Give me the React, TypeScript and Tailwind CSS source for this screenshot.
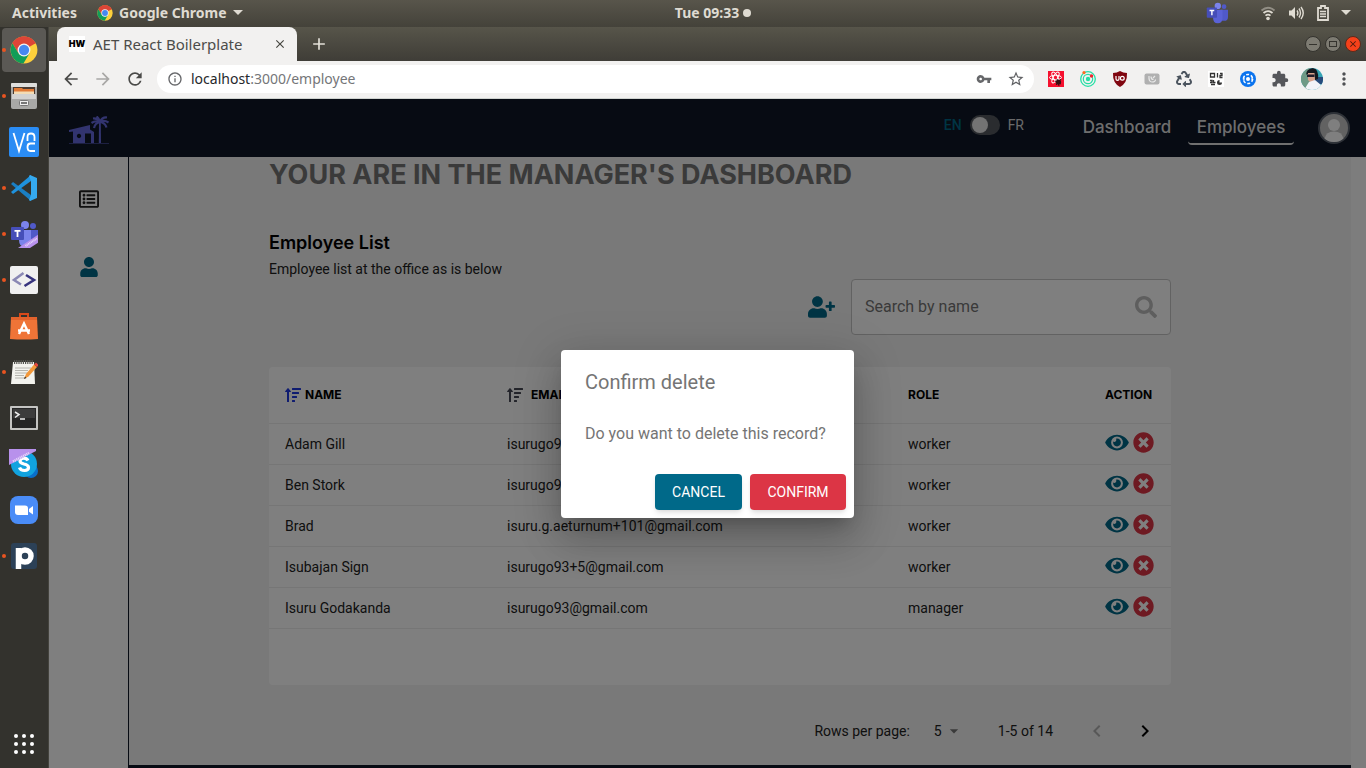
import React from "react";
import {
  FaEye,
  FaRecycle,
  FaRegListAlt,
  FaSearch,
  FaSortAmountUp,
  FaTimesCircle,
  FaUser,
  FaUserPlus,
} from "react-icons/fa";
import {
  MdAdd,
  MdArrowBack,
  MdArrowDropDown,
  MdArrowForward,
  MdChevronLeft,
  MdChevronRight,
  MdClose,
  MdExtension,
  MdInfoOutline,
  MdMoreVert,
  MdRefresh,
  MdStarBorder,
  MdVpnKey,
} from "react-icons/md";

const employees = [
  { name: "Adam Gill", email: "isurugo93+1@gmail.com", role: "worker" },
  { name: "Ben Stork", email: "isurugo93+2@gmail.com", role: "worker" },
  { name: "Brad", email: "isuru.g.aeturnum+101@gmail.com", role: "worker" },
  { name: "Isubajan Sign", email: "isurugo93+5@gmail.com", role: "worker" },
  { name: "Isuru Godakanda", email: "isurugo93@gmail.com", role: "manager" },
];

/* ---------- drawings ---------- */

function ChromeIcon({ className }: { className: string }) {
  return (
    <svg viewBox="0 0 48 48" className={className} aria-hidden="true">
      <circle cx="24" cy="24" r="23" fill="#fdd03b" />
      <path d="M24 24 L4.1 12.5 A23 23 0 0 1 43.9 12.5 Z" fill="#dd4537" />
      <path d="M24 13 H44.2 A23 23 0 0 0 4.1 12.5 L14.5 29.5 Z" fill="#dd4537" />
      <path d="M4.1 12.5 A23 23 0 0 0 23 47 L33.5 29.5 L24 34.5 L14.5 29.5 Z" fill="#119d58" />
      <circle cx="24" cy="24" r="11" fill="#f4f4f2" />
      <circle cx="24" cy="24" r="8.8" fill="#4688f1" />
    </svg>
  );
}

function FilesIcon() {
  return (
    <svg viewBox="0 0 28 28" className="size-7" aria-hidden="true">
      <rect x="1" y="1" width="26" height="26" rx="2" fill="#a9a9a7" />
      <rect x="1" y="1" width="26" height="4" rx="1" fill="#dededc" />
      <rect x="3" y="5" width="22" height="8" fill="#4a3a30" />
      <path d="M4 6h8l1 1h11v5H4z" fill="#e07a35" />
      <rect x="4" y="9.500" width="20" height="2.500" fill="#f3dcb4" />
      <rect x="2" y="12" width="24" height="14" rx="1" fill="#d2d2d0" />
      <rect x="2" y="17" width="24" height="9" fill="#a8a8a6" />
      <rect x="9.500" y="18.500" width="9" height="5" rx="1" fill="#eee" stroke="#777" />
      <rect x="11" y="20" width="6" height="2" fill="#777" />
    </svg>
  );
}

function VncIcon() {
  return (
    <svg viewBox="0 0 30 30" className="size-[30px]" fill="none" stroke="#fff" strokeWidth="1.800" aria-hidden="true">
      <rect width="30" height="30" rx="2" fill="#2a8cf4" stroke="none" />
      <path d="M4.500 6 L10 24 L15.500 6" />
      <path d="M18.500 14 V10 Q18.500 6.500 22 6.500 Q25.500 6.500 25.500 10 V14" />
      <path d="M26 16.500 H21.500 Q18.500 16.500 18.500 20 Q18.500 24 21.500 24 H26" />
    </svg>
  );
}

function CodeIcon() {
  return (
    <svg viewBox="0 0 26 26" className="size-[26px]" aria-hidden="true">
      <path d="M0 9 L2 7 L20 20 L20 26 Z" fill="#1a7fc4" />
      <path d="M0 17 L2 19 L20 6 L20 0 Z" fill="#1f92dd" />
      <path d="M19 0 L26 3 V23 L19 26 L18 25 L20 20 V6 L18 1 Z" fill="#35aaf0" />
    </svg>
  );
}

function TeamsIcon({ preview, className }: { preview?: boolean; className: string }) {
  return (
    <svg viewBox="0 0 28 28" className={className} aria-hidden="true">
      <circle cx="15" cy="5" r="4" fill="#7b83eb" />
      <circle cx="23" cy="6" r="3" fill="#5059c9" />
      <path d="M19 10h9v9q0 5-5 5h-4z" fill="#5059c9" />
      <path d="M9 10h12v10q0 7-6 7-6 0-6-7z" fill={preview ? "#7b83eb" : "#5a62d6"} />
      <rect x="1" y="7" width="13" height="13" rx="1" fill="#464eb8" />
      <path d="M4.500 10h6v1.800H8.400V17H6.600v-5.200H4.500z" fill="#fff" />
      {preview && (
        <>
          <path d="M8 28 L29 14 V22 L20 28 Z" fill="#b891ec" />
          <path d="M15.500 26 L27 18.500" stroke="#e4d5fa" strokeWidth="2" strokeDasharray="1 0.6" />
        </>
      )}
    </svg>
  );
}

function BracketsIcon() {
  return (
    <svg viewBox="0 0 28 28" className="size-7" fill="none" strokeWidth="2.600" aria-hidden="true">
      <rect width="28" height="28" rx="2" fill="#f0f0f0" stroke="none" />
      <path d="M13.500 7 L4 14 L11 18.500" stroke="#8a88b4" />
      <path d="M16 9 L24 14 L14.500 20" stroke="#37347e" />
    </svg>
  );
}

function SoftwareIcon() {
  return (
    <svg viewBox="0 0 28 28" className="size-7" fill="none" aria-hidden="true">
      <path d="M10 6 V2 H18 V6" stroke="#d8491a" strokeWidth="2" />
      <path d="M1 5 H27 L28 27 Q14 28 0 27 Z" fill="#ef7437" />
      <path d="M1 5 H27 V8 H1 Z" fill="#e2622c" />
      <path d="M9 22 L14 11.500 L19 22 M8 18.500 H20" stroke="#fff" strokeWidth="2.400" />
    </svg>
  );
}

function NotesIcon() {
  return (
    <svg viewBox="0 0 28 26" className="h-[26px] w-7" aria-hidden="true">
      <path d="M3 3 H24 L25 25 H1 Z" fill="#f3f3ee" />
      <path d="M4 3 H23" stroke="#54544f" strokeWidth="4" strokeDasharray="1.2 1" />
      <path d="M5 9h16M5 11.500h13M5 14h14M5 16.500h9M5 19h10" stroke="#b4b4ae" strokeWidth="1" />
      <path d="M14 20 L16 15 L24 5.500 L27 8 L18.500 17.500 Z" fill="#f2983a" />
      <path d="M24 5.500 L26 3.500 L28.500 6 L27 8 Z" fill="#e5473d" />
      <path d="M14 20 L15 17.500 L16.500 19 Z" fill="#333" />
    </svg>
  );
}

function TerminalIcon() {
  return (
    <svg viewBox="0 0 28 24" className="h-6 w-7" aria-hidden="true">
      <rect width="28" height="24" rx="1" fill="#c4c4c2" />
      <rect x="2" y="2" width="24" height="20" fill="#262626" />
      <rect x="3" y="3" width="22" height="9" fill="#3c3c3c" />
      <path d="M5 6 L9 8.500 L5 11.500 M10 13 H15" fill="none" stroke="#eee" strokeWidth="1.500" />
    </svg>
  );
}

function SkypeIcon() {
  return (
    <svg viewBox="0 0 30 30" className="size-[30px]" aria-hidden="true">
      <circle cx="22" cy="22" r="7" fill="#0a6fc9" />
      <circle cx="15" cy="15" r="13" fill="#11a3df" />
      <path
        d="M19 11.500 Q17.500 9 14.500 9.200 Q11 9.500 11 12 Q11 14 15 15 Q19.500 16 19.500 18.500 Q19.500 21.300 15.500 21.500 Q11.500 21.500 10.500 18.500"
        fill="none"
        stroke="#fff"
        strokeWidth="3.200"
      />
      <path d="M0 0 H27 V2 L0 16 Z" fill="#b891ec" />
      <path d="M4 12.500 L20 4" stroke="#e4d5fa" strokeWidth="2.500" strokeDasharray="1.2 0.7" />
    </svg>
  );
}

function ZoomIcon() {
  return (
    <svg viewBox="0 0 28 28" className="size-7" aria-hidden="true">
      <rect width="28" height="28" rx="8" fill="#4a8cf7" />
      <path d="M5 9.500 H15 Q18 9.500 18 12.500 V19 H8 Q5 19 5 16 Z" fill="#fff" />
      <path d="M19 13 L23 10 V18.500 L19 15.800 Z" fill="#fff" />
    </svg>
  );
}

function PIcon() {
  return (
    <svg viewBox="0 0 26 26" className="size-[26px]" fill="none" aria-hidden="true">
      <rect width="26" height="26" rx="3" fill="#2c4157" />
      <circle cx="14" cy="13" r="6" stroke="#fff" strokeWidth="5.500" />
      <path d="M7.500 5 V26" stroke="#fff" strokeWidth="5.500" />
    </svg>
  );
}

function HouseLogo() {
  return (
    <svg viewBox="0 0 40 28" className="h-7 w-10" fill="#6569de" aria-hidden="true">
      <path
        d="M0 14 L21 9 V13.500 L25 16 V27 H22 V17.500 H16 V27 H4 V15.500 L0 16 Z M10 17.800 a2.200 2.200 0 1 0 0.010 0 Z"
        fillRule="evenodd"
      />
      <path d="M30 6 H31.800 L32 27 H29.800 Z" />
      <g fill="none" stroke="#6569de" strokeWidth="2.200">
        <path d="M31 6 Q28 2 24 2.500" />
        <path d="M31 6 Q30 2 27.500 0.500" />
        <path d="M31 6 Q33 1 38 1.500" />
        <path d="M31 6 Q35 3.500 39.500 6.500" />
        <path d="M31 6 Q36 6.500 37.500 11.500" />
        <path d="M31 6 Q26 4.500 22.500 7" />
        <path d="M31 6 Q26 7 25 12" />
      </g>
      <rect x="0" y="27" width="40" height="1" opacity="0.500" />
    </svg>
  );
}

function WifiIcon() {
  return (
    <svg viewBox="0 0 16 16" className="size-4" fill="none" stroke="#dfdbd2" strokeWidth="1.800" aria-hidden="true">
      <path d="M1.500 5.500 Q8 0 14.500 5.500" opacity="0.450" />
      <path d="M3.500 8 Q8 4.200 12.500 8" />
      <path d="M5.500 10.600 Q8 8.600 10.500 10.600" />
      <circle cx="8" cy="13.500" r="1.800" fill="#dfdbd2" stroke="none" />
    </svg>
  );
}

function SoundIcon() {
  return (
    <svg viewBox="0 0 17 16" className="h-4 w-[17px]" fill="none" stroke="#dfdbd2" strokeWidth="1.400" aria-hidden="true">
      <path d="M1 5.500 H3.500 L7 2 V14 L3.500 10.500 H1 Z" fill="#dfdbd2" stroke="none" />
      <path d="M9 5.500 Q10.800 8 9 10.500 M11 3.500 Q14 8 11 12.500 M13 2 Q17.500 8 13 14" />
    </svg>
  );
}

function BatteryIcon() {
  return (
    <svg viewBox="0 0 12 16" className="h-4 w-3" fill="none" stroke="#dfdbd2" aria-hidden="true">
      <path d="M4 1 H8 V3 H11 V15 H1 V3 H4 Z" strokeWidth="1.800" />
      <path d="M3 6.500 H9 M3 9 H9 M3 11.500 H9" strokeWidth="1.300" />
    </svg>
  );
}

function CaretDown({ className }: { className: string }) {
  return (
    <svg viewBox="0 0 10 5" className={className} fill="#dfdbd2" aria-hidden="true">
      <path d="M0 0 H10 L5 5 Z" />
    </svg>
  );
}

function ReactBugIcon() {
  return (
    <svg viewBox="0 0 16 16" className="size-4" fill="none" stroke="#fff" strokeWidth="1" aria-hidden="true">
      <rect width="16" height="16" fill="#f5102e" stroke="none" />
      <ellipse cx="7.500" cy="6.500" rx="6" ry="2.200" />
      <ellipse cx="7.500" cy="6.500" rx="6" ry="2.200" transform="rotate(60 7.500 6.500)" />
      <ellipse cx="7.500" cy="6.500" rx="6" ry="2.200" transform="rotate(120 7.500 6.500)" />
      <path d="M7 10l6 3M13 8l-5 6M9 8l2 7" stroke="#3a1014" />
      <circle cx="10.500" cy="11" r="2.600" fill="#3a1014" stroke="none" />
    </svg>
  );
}

function OrbitIcon() {
  return (
    <svg viewBox="0 0 16 16" className="size-4" fill="none" stroke="#25dfa5" aria-hidden="true">
      <circle cx="8" cy="8" r="7.300" strokeWidth="1.300" />
      <circle cx="8" cy="8" r="4.700" strokeWidth="1.200" />
      <circle cx="8" cy="8" r="2.200" fill="#25dfa5" stroke="none" />
      <circle cx="4" cy="1.600" r="1.600" fill="#ff6a1f" stroke="none" />
      <circle cx="11.500" cy="5" r="1.700" fill="#f3222f" stroke="none" />
    </svg>
  );
}

function ShieldIcon() {
  return (
    <svg viewBox="0 0 16 16" className="size-4" fill="none" aria-hidden="true">
      <path d="M8 0 Q11 2 15 2 Q15.500 12 8 16 Q0.500 12 1 2 Q5 2 8 0 Z" fill="#800610" />
      <path d="M4 5 V8 Q4 9.300 5.500 9.300 Q7 9.300 7 8 V5" stroke="#fff" strokeWidth="1.200" />
      <circle cx="10.300" cy="7.200" r="1.900" stroke="#fff" strokeWidth="1.200" />
    </svg>
  );
}

function GreyBadgeIcon() {
  return (
    <svg viewBox="0 0 16 12" className="h-3 w-4" fill="none" aria-hidden="true">
      <rect x="0.500" y="0.500" width="15" height="11" rx="2" fill="#b0b0b0" />
      <path d="M5 3 Q4.500 9 8 9 Q11.500 9 11.500 6.500 M7 3.500 Q7 6.500 9.500 6.500 M11 3 L9 5" stroke="#e8e8e8" strokeWidth="1.200" />
    </svg>
  );
}

function QrIcon() {
  return (
    <svg viewBox="0 0 16 16" className="size-4" aria-hidden="true">
      <rect width="16" height="16" fill="#fff" />
      <g fill="none" stroke="#333" strokeWidth="1.300">
        <path d="M2.500 2.500h4v3.500h-4z M9.500 2v4.500 M12 2.500h2v2h-2v2h2.500 M2 9.500h2v2H2 M5.500 9v2.500h2 M3 13.500h4" />
      </g>
      <circle cx="11.500" cy="11.500" r="2.500" fill="#333" />
      <path d="M11.500 11.500 V8.500 H14.500 V11.500 Z" fill="#fff" />
    </svg>
  );
}

function BlueHubIcon() {
  return (
    <svg viewBox="0 0 16 16" className="size-4" aria-hidden="true">
      <circle cx="8" cy="8" r="8" fill="#0a73ee" />
      <circle cx="8" cy="8" r="4.600" fill="none" stroke="#fff" strokeWidth="1.500" strokeDasharray="3 1.817" />
      <path d="M2.500 8 L4.500 6.500 V9.500 Z M13.500 8 L11.500 6.500 V9.500 Z" fill="#fff" />
      <circle cx="8" cy="8" r="2" fill="#fff" />
    </svg>
  );
}

function PhotoAvatar() {
  return (
    <svg viewBox="0 0 22 22" className="size-[22px] rounded-full" aria-hidden="true">
      <rect width="22" height="22" fill="#36a3b4" />
      <rect width="9" height="22" fill="#6f9a86" />
      <path d="M13 9 H22 V16 H13 Z" fill="#274b7c" />
      <path d="M5 7 Q5 1 12 0 Q18 1 17 11 L14 12 L13 6 H6 Z" fill="#15181f" />
      <path d="M7 5 H13.500 L14 12 L10 15 L7 12 Z" fill="#d9a28c" />
      <path d="M6 6.500 H13.500 V9 H6 Z" fill="#241d2c" />
      <path d="M3 22 L8 14 L14 12 L20 17 L21 22 Z" fill="#f2f3f8" />
    </svg>
  );
}

function UserAvatar() {
  return (
    <svg viewBox="0 0 32 32" className="size-8" aria-hidden="true">
      <circle cx="16" cy="16" r="15" fill="#c4c4c4" stroke="#5d6470" strokeWidth="2" />
      <circle cx="16" cy="13" r="6" fill="#fff" />
      <path d="M6.500 26.500 Q8 19.500 16 19.500 Q24 19.500 25.500 26.500 Q21.500 30 16 30 Q10.500 30 6.500 26.500 Z" fill="#fff" />
    </svg>
  );
}

/* ---------- desktop ---------- */

function TopBar() {
  return (
    <header className="grid h-[27px] shrink-0 grid-cols-3 items-center bg-linear-to-b from-[#58554b] to-[#44423a] px-3 pb-0.5 text-sm font-bold text-[#dfdbd2]">
      <div className="flex items-center gap-5">
        <button className="text-sm font-bold">Activities</button>
        <button className="flex items-center gap-1.5 text-sm font-bold">
          <ChromeIcon className="size-4" />
          Google Chrome
          <CaretDown className="h-[5px] w-2.5" />
        </button>
      </div>
      <button className="flex items-center justify-self-center gap-1 pl-15 text-sm font-bold">
        Tue 09:33
        <span className="size-2 rounded-full bg-[#dfdbd2]" />
      </button>
      <div className="flex items-center justify-end gap-3 pr-[3px]">
        <TeamsIcon className="mr-5 size-[22px]" />
        <WifiIcon />
        <SoundIcon />
        <BatteryIcon />
        <CaretDown className="h-[5px] w-2.5" />
      </div>
    </header>
  );
}

const dockApps: { label: string; icon: React.ReactNode; running: boolean }[] = [
  { label: "Google Chrome", icon: <ChromeIcon className="size-7" />, running: true },
  { label: "Files", icon: <FilesIcon />, running: true },
  { label: "VNC Viewer", icon: <VncIcon />, running: false },
  { label: "Visual Studio Code", icon: <CodeIcon />, running: true },
  { label: "Teams", icon: <TeamsIcon preview className="size-7" />, running: true },
  { label: "Brackets", icon: <BracketsIcon />, running: true },
  { label: "Software", icon: <SoftwareIcon />, running: false },
  { label: "Text Editor", icon: <NotesIcon />, running: true },
  { label: "Terminal", icon: <TerminalIcon />, running: false },
  { label: "Skype", icon: <SkypeIcon />, running: false },
  { label: "Zoom", icon: <ZoomIcon />, running: false },
  { label: "Postbird", icon: <PIcon />, running: true },
];

function Dock() {
  return (
    <nav className="flex w-[49px] shrink-0 flex-col border-r border-[#44433d] bg-[#33322d]">
      {dockApps.map((app, index) => (
        <button
          key={app.label}
          aria-label={app.label}
          className="relative flex h-[46px] w-12 items-center justify-center p-px"
        >
          <span
            className={
              index === 0
                ? "flex size-11 items-center justify-center rounded-sm bg-[#5b5955]"
                : "flex size-11 items-center justify-center"
            }
          >
            {app.icon}
          </span>
          {app.running && <span className="absolute top-[21px] left-0.5 size-1 rounded-full bg-[#e95420]" />}
        </button>
      ))}
      <button aria-label="Show applications" className="mt-auto mb-3.5 grid grid-cols-3 gap-1 self-center">
        {Array.from({ length: 9 }, (_, dot) => (
          <span key={dot} className="size-1 rounded-full bg-white" />
        ))}
      </button>
    </nav>
  );
}

/* ---------- browser ---------- */

function TabStrip() {
  return (
    <div className="flex h-[34px] shrink-0 items-end bg-linear-to-b from-[#57554a] to-[#3f3d37] pr-[5px] pl-2">
      <div className="flex h-[34px] w-60 items-center rounded-t-lg bg-[#f2f1f0] pr-2.5 pl-3">
        <span className="flex size-4 items-center justify-center bg-white font-['Inter'] text-[9px] font-black text-black">
          HW
        </span>
        <span className="ml-2 flex-1 text-[15px] whitespace-nowrap text-[#4c4c4a]">AET React Boilerplate</span>
        <button aria-label="Close tab">
          <MdClose className="size-3.5 text-[#45453f]" />
        </button>
      </div>
      <button aria-label="New tab" className="flex h-[34px] items-center px-3">
        <MdAdd className="size-5 text-[#e3e0d8]" />
      </button>
      <div className="ml-auto flex h-[34px] items-center gap-1">
        <button aria-label="Minimize" className="flex size-4 items-center justify-center rounded-full border border-[#34332e] bg-[#7d7b72]">
          <span className="h-px w-2 bg-[#34332e]" />
        </button>
        <button aria-label="Maximize" className="flex size-4 items-center justify-center rounded-full border border-[#34332e] bg-[#7d7b72]">
          <span className="h-1.5 w-2 border border-[#34332e]" />
        </button>
        <button aria-label="Close window" className="flex size-4 items-center justify-center rounded-full border border-[#5a2a1c] bg-[#f5411a]">
          <MdClose className="size-2.5 text-[#4a1a0e]" />
        </button>
      </div>
    </div>
  );
}

const extensions: { label: string; icon: React.ReactNode }[] = [
  { label: "React inspector", icon: <ReactBugIcon /> },
  { label: "Orbit", icon: <OrbitIcon /> },
  { label: "Content blocker", icon: <ShieldIcon /> },
  { label: "Redux", icon: <GreyBadgeIcon /> },
  { label: "Recycle", icon: <FaRecycle className="size-4 text-[#4b545e]" /> },
  { label: "QR code", icon: <QrIcon /> },
  { label: "Hub", icon: <BlueHubIcon /> },
  { label: "Extensions", icon: <MdExtension className="size-[18px] text-[#55565a]" /> },
  { label: "Profile", icon: <PhotoAvatar /> },
  { label: "Menu", icon: <MdMoreVert className="size-5 text-[#4f5053]" /> },
];

function Toolbar() {
  return (
    <div className="flex h-[38px] shrink-0 items-center border-b border-[#cfd3d0] bg-[#f2f1f0] px-1.5 pb-px">
      <button aria-label="Back" className="flex w-8 justify-center">
        <MdArrowBack className="size-5 text-[#4a4a48]" />
      </button>
      <button aria-label="Forward" className="flex w-8 justify-center">
        <MdArrowForward className="size-5 text-[#a8a7a5]" />
      </button>
      <button aria-label="Reload" className="flex w-8 justify-center">
        <MdRefresh className="size-5 text-[#4a4a48]" />
      </button>
      <div className="mx-1.5 flex h-7 flex-1 items-center rounded-full bg-white pr-0.5 pl-2.5">
        <MdInfoOutline className="size-4 text-[#66676a]" />
        <span className="ml-2 flex-1 text-sm text-[#757679]">
          <span className="text-[#26282b]">localhost</span>:3000/employee
        </span>
        <button aria-label="Saved passwords" className="flex w-8 justify-center">
          <MdVpnKey className="size-4 text-[#66676a]" />
        </button>
        <button aria-label="Bookmark" className="flex w-8 justify-center">
          <MdStarBorder className="size-[18px] text-[#5f6063]" />
        </button>
      </div>
      {extensions.map((extension) => (
        <button key={extension.label} aria-label={extension.label} className="flex w-8 justify-center">
          {extension.icon}
        </button>
      ))}
    </div>
  );
}

/* ---------- web app ---------- */

function AppHeader() {
  return (
    <header className="flex h-[58px] shrink-0 items-center bg-[#0e1726] pr-4 pl-5">
      <a href="#home" aria-label="Home" className="mr-auto pt-1">
        <HouseLogo />
      </a>
      <label className="mr-[50px] flex items-center gap-2 pb-1.5 text-sm text-[#d5d5d5]">
        <span className="font-medium text-[#006989]">EN</span>
        <input type="checkbox" aria-label="Switch language to French" className="peer sr-only" />
        <span className="flex h-5 w-[30px] items-center rounded-full bg-[#55595f] p-0.5">
          <span className="size-4 rounded-full bg-[#e6e6e6]" />
        </span>
        FR
      </label>
      <nav className="mr-6 flex gap-2 font-['Inter'] text-[17px] font-medium text-[#dcdcdc]">
        <a href="#dashboard" className="w-[106px] rounded-sm pt-1 pb-1 text-center">
          Dashboard
        </a>
        <a href="#employees" className="w-[106px] rounded-sm border-b-2 border-[#e0e0e0] pt-1 pb-0.5 text-center">
          Employees
        </a>
      </nav>
      <button aria-label="Account">
        <UserAvatar />
      </button>
    </header>
  );
}

function EmployeeTable() {
  return (
    <div className="rounded-sm bg-white pb-14">
      <table className="w-full table-fixed border-collapse text-left text-sm text-[#212121]">
        <colgroup>
          <col className="w-[222px]" />
          <col />
          <col className="w-[197px]" />
          <col className="w-[82px]" />
        </colgroup>
        <thead>
          <tr className="h-14 border-b border-[#ededed] font-['Inter'] text-xs text-black">
            <th className="px-4 font-bold">
              <button className="flex items-center gap-1">
                <FaSortAmountUp className="size-4 text-[#1f38e0]" />
                NAME
              </button>
            </th>
            <th className="px-4 font-bold">
              <button className="flex items-center gap-2">
                <FaSortAmountUp className="size-4 text-[#484b57]" />
                EMAIL
              </button>
            </th>
            <th className="px-4 font-bold">ROLE</th>
            <th className="px-4 font-bold">ACTION</th>
          </tr>
        </thead>
        <tbody>
          {employees.map((employee) => (
            <tr key={employee.name} className="h-[41px] border-b border-[#ededed]">
              <td className="px-4">{employee.name}</td>
              <td className="px-4">{employee.email}</td>
              <td className="px-4">{employee.role}</td>
              <td className="px-4">
                <span className="flex items-center gap-1 pb-0.5">
                  <button aria-label={`View ${employee.name}`}>
                    <FaEye className="h-[21px] w-6 text-[#006989]" />
                  </button>
                  <button aria-label={`Delete ${employee.name}`}>
                    <FaTimesCircle className="size-[21px] text-[#dc3545]" />
                  </button>
                </span>
              </td>
            </tr>
          ))}
        </tbody>
      </table>
    </div>
  );
}

function Pagination() {
  return (
    <div className="mt-5 flex h-[52px] items-center justify-end pr-0.5 text-sm text-[#212121]">
      <label htmlFor="rows">Rows per page:</label>
      <span className="relative ml-6 flex items-center">
        <select id="rows" defaultValue="5" className="w-8 appearance-none bg-transparent">
          <option value="5">5</option>
          <option value="10">10</option>
        </select>
        <MdArrowDropDown className="pointer-events-none absolute top-0 right-0 h-5 w-6 text-[#757575]" />
      </span>
      <span className="ml-8">1-5 of 14</span>
      <button aria-label="Previous page" disabled className="ml-5 flex size-12 items-center justify-center text-[#b0b0b0]">
        <MdChevronLeft className="size-6" />
      </button>
      <button aria-label="Next page" className="flex size-12 items-center justify-center text-black">
        <MdChevronRight className="size-6" />
      </button>
    </div>
  );
}

function ConfirmDialog() {
  return (
    <div className="absolute inset-0 flex items-center justify-center bg-black/50">
      <div
        role="dialog"
        aria-modal="true"
        aria-labelledby="confirm-title"
        className="min-w-[293px] rounded-sm bg-white text-[#757575] shadow-[0_11px_15px_-7px_rgba(0,0,0,0.2),0_24px_38px_3px_rgba(0,0,0,0.14),0_9px_46px_8px_rgba(0,0,0,0.12)]"
      >
        <h2 id="confirm-title" className="px-6 py-4 text-xl leading-8">
          Confirm delete
        </h2>
        <p className="px-6 pt-2 pb-5 text-base leading-6">Do you want to delete this record?</p>
        <div className="flex justify-end gap-2 p-2">
          <button className="h-9 min-w-[87px] rounded-sm bg-[#006989] px-4 text-sm text-white shadow-md">CANCEL</button>
          <button className="h-9 min-w-24 rounded-sm bg-[#dc3545] px-4 text-sm text-white shadow-md">CONFIRM</button>
        </div>
      </div>
    </div>
  );
}

function WebApp() {
  return (
    <div className="relative flex min-h-0 flex-1 flex-col bg-white font-['Roboto',sans-serif]">
      <AppHeader />
      <div className="flex min-h-0 flex-1">
        <nav className="flex w-20 shrink-0 flex-col items-center gap-12 border-r border-[#0e1726] bg-white pt-8">
          <a href="#list" aria-label="Records">
            <FaRegListAlt className="size-5 text-[#212121]" />
          </a>
          <a href="#people" aria-label="Employees">
            <FaUser className="h-5 w-[18px] text-[#006989]" />
          </a>
        </nav>
        <main className="flex min-w-0 flex-1 flex-col border-b-[3px] border-[#0e1726] bg-[#f2f2f2] pr-[180px] pl-[140px]">
          <h1 className="font-['Inter'] text-[27px] leading-9 font-bold text-[#757575]">
            YOUR ARE IN THE MANAGER'S DASHBOARD
          </h1>
          <h2 className="mt-[38px] font-['Inter'] text-lg leading-6 font-semibold text-black">Employee List</h2>
          <p className="mt-1 text-sm leading-5 text-[#212121]">Employee list at the office as is below</p>
          <div className="flex items-center justify-end gap-4">
            <button aria-label="Add employee">
              <FaUserPlus className="h-[22px] w-[27px] text-[#006989]" />
            </button>
            <label className="flex h-14 w-80 items-center rounded-sm border border-[#c4c4c4] bg-white px-[13px]">
              <input
                type="search"
                aria-label="Search by name"
                placeholder="Search by name"
                className="min-w-0 flex-1 bg-transparent text-base outline-none placeholder:text-[#757575]"
              />
              <FaSearch className="size-[22px] text-[#bdbdbd]" />
            </label>
          </div>
          <div className="mt-8">
            <EmployeeTable />
          </div>
          <Pagination />
        </main>
        <div className="w-[15px] shrink-0 bg-[#fafafa]" />
      </div>
      <ConfirmDialog />
    </div>
  );
}

export default function App() {
  return (
    <div className="flex h-screen flex-col overflow-hidden font-['Noto_Sans',sans-serif]">
      <TopBar />
      <div className="flex min-h-0 flex-1">
        <Dock />
        <div className="flex min-w-0 flex-1 flex-col">
          <TabStrip />
          <Toolbar />
          <WebApp />
        </div>
      </div>
    </div>
  );
}
